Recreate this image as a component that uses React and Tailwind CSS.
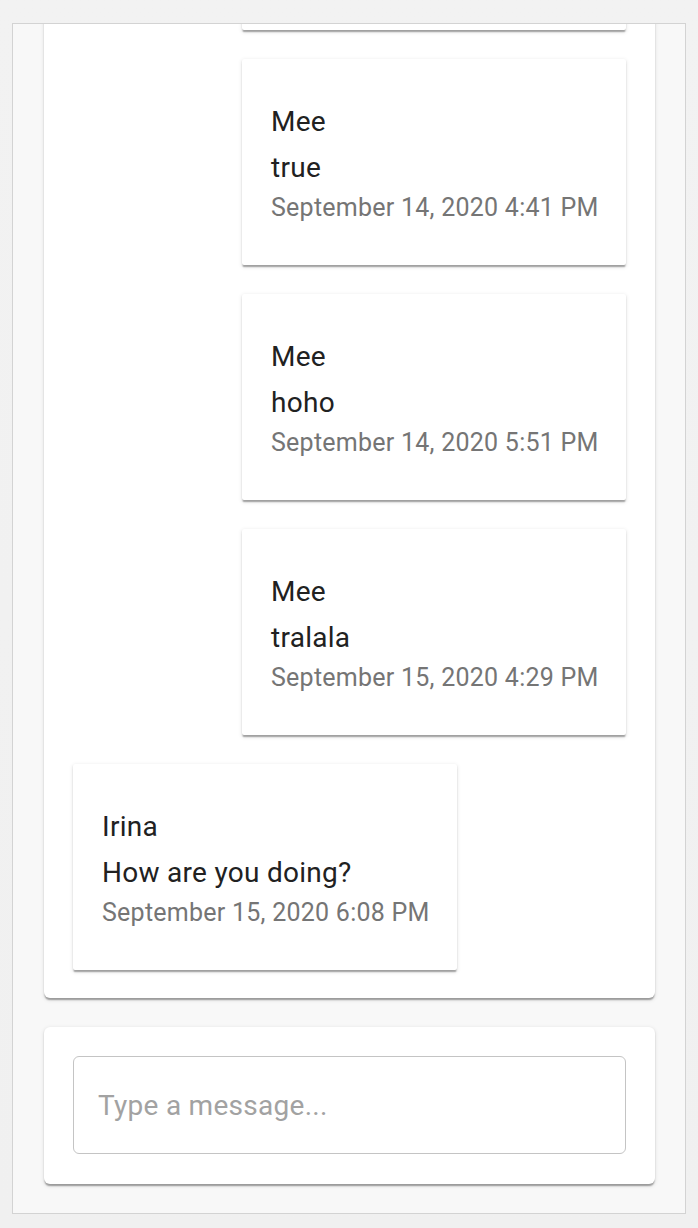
import React from 'react';

const messages = [
  { id: 0, author: 'Mee', text: 'hi', date: 'September 14, 2020 4:40 PM', mine: true },
  { id: 1, author: 'Mee', text: 'true', date: 'September 14, 2020 4:41 PM', mine: true },
  { id: 2, author: 'Mee', text: 'hoho', date: 'September 14, 2020 5:51 PM', mine: true },
  { id: 3, author: 'Mee', text: 'tralala', date: 'September 15, 2020 4:29 PM', mine: true },
  { id: 4, author: 'Irina', text: 'How are you doing?', date: 'September 15, 2020 6:08 PM', mine: false },
];

const cardShadow =
  'shadow-[0_3px_1.5px_-1.5px_rgba(0,0,0,0.2),0_1.5px_1.5px_0_rgba(0,0,0,0.14),0_1.5px_4.5px_0_rgba(0,0,0,0.12)]';

const Message = ({ message }) => (
  <div className={`flex ${message.mine ? 'justify-end' : 'justify-start'}`}>
    <div className={`w-[384px] h-[206px] shrink-0 bg-white rounded-[2px] pl-[29px] pr-4 pt-[42px] ${cardShadow}`}>
      <p className="text-[28px] leading-[42px] tracking-[0.01em] text-[#212121] mb-[4px]">{message.author}</p>
      <p className="text-[28px] leading-[42px] tracking-[0.01em] text-[#212121] mb-[1px]">{message.text}</p>
      <p className="text-[25px] leading-[36px] tracking-[0.01em] text-[#757575]">{message.date}</p>
    </div>
  </div>
);

export default function App() {
  return (
    <div
      className="w-[698px] h-[1228px] pt-[23px] px-[12px] bg-gradient-to-b from-[#f2f2f2] to-[#f0f0f0] overflow-hidden"
      style={{ fontFamily: 'Roboto, "Liberation Sans", sans-serif' }}
    >
      <div className="w-[674px] h-[1191px] border border-[#d3d3d3] bg-[#f8f8f8] pl-[31px] pr-[30px] pb-[29px] flex flex-col justify-end overflow-hidden">
        {/* Chat scrolled to the latest message */}
        <div className={`bg-white rounded-[6px] p-[29px] pb-[28px] flex flex-col gap-[29px] shrink-0 ${cardShadow}`}>
          {messages.map((msg) => (
            <Message key={msg.id} message={msg} />
          ))}
        </div>

        <div className={`mt-[29px] bg-white rounded-[6px] p-[29px] pb-[30px] shrink-0 ${cardShadow}`}>
          <input
            type="text"
            placeholder="Type a message..."
            className="w-full h-[98px] rounded-[6px] border-[1.5px] border-[#c4c4c4] px-[24px] text-[28px] tracking-[0.01em] text-[#212121] placeholder:text-[#a2a2a2] outline-none"
          />
        </div>
      </div>
    </div>
  );
}
